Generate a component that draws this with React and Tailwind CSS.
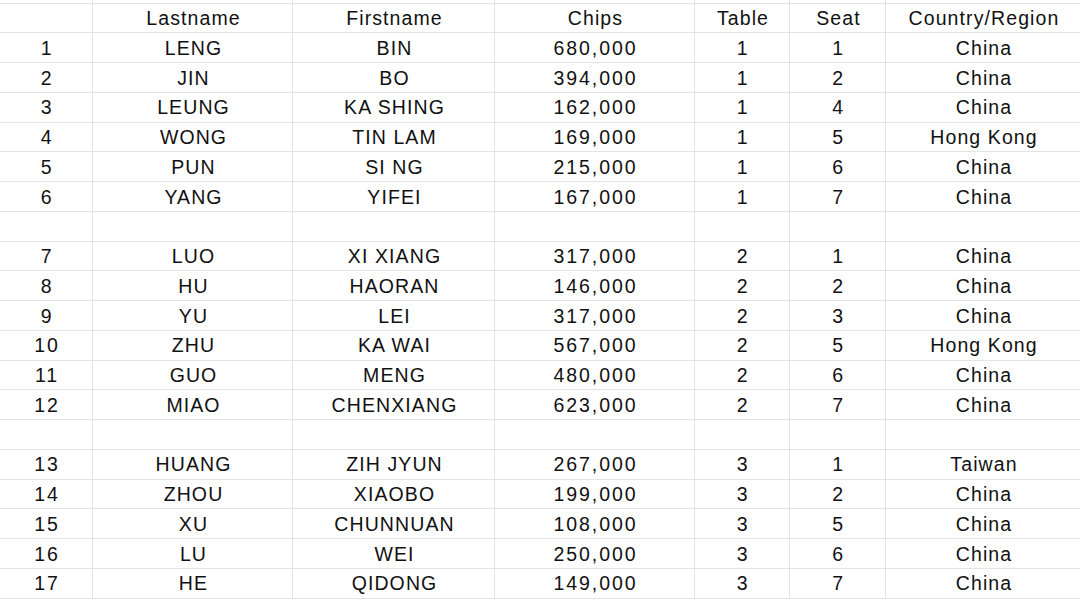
import React from 'react';

const header = ['', 'Lastname', 'Firstname', 'Chips', 'Table', 'Seat', 'Country/Region'];

const rows = [
  ['1', 'LENG', 'BIN', '680,000', '1', '1', 'China'],
  ['2', 'JIN', 'BO', '394,000', '1', '2', 'China'],
  ['3', 'LEUNG', 'KA SHING', '162,000', '1', '4', 'China'],
  ['4', 'WONG', 'TIN LAM', '169,000', '1', '5', 'Hong Kong'],
  ['5', 'PUN', 'SI NG', '215,000', '1', '6', 'China'],
  ['6', 'YANG', 'YIFEI', '167,000', '1', '7', 'China'],
  null,
  ['7', 'LUO', 'XI XIANG', '317,000', '2', '1', 'China'],
  ['8', 'HU', 'HAORAN', '146,000', '2', '2', 'China'],
  ['9', 'YU', 'LEI', '317,000', '2', '3', 'China'],
  ['10', 'ZHU', 'KA WAI', '567,000', '2', '5', 'Hong Kong'],
  ['11', 'GUO', 'MENG', '480,000', '2', '6', 'China'],
  ['12', 'MIAO', 'CHENXIANG', '623,000', '2', '7', 'China'],
  null,
  ['13', 'HUANG', 'ZIH JYUN', '267,000', '3', '1', 'Taiwan'],
  ['14', 'ZHOU', 'XIAOBO', '199,000', '3', '2', 'China'],
  ['15', 'XU', 'CHUNNUAN', '108,000', '3', '5', 'China'],
  ['16', 'LU', 'WEI', '250,000', '3', '6', 'China'],
  ['17', 'HE', 'QIDONG', '149,000', '3', '7', 'China'],
];

const empty = ['', '', '', '', '', '', ''];

// numeric columns get wider tracking to mimic the wide digits of the original font
const numeric = [true, false, false, true, true, true, false];

function Row({ cells, height = 'h-[29.75px]', isHeader = false }) {
  return (
    <div className={`grid grid-cols-[93px_200px_202px_200px_95px_96px_1fr] ${height} border-b border-[#e4e4e4]`}>
      {cells.map((c, i) => (
        <div
          key={i}
          className={`flex items-center justify-center pt-[2px] ${i < 6 ? 'border-r border-[#e4e4e4]' : ''} ${
            numeric[i] && !isHeader ? 'tracking-[1.9px] pl-[2px]' : 'tracking-[1.1px] pl-[2px]'
          }`}
        >
          {c}
        </div>
      ))}
    </div>
  );
}

export default function App() {
  return (
    <div className="w-[1080px] h-[600px] overflow-hidden bg-white text-[#111] text-[19.5px] leading-none font-['Liberation_Sans',Arial,sans-serif]">
      <Row cells={empty} height="h-[3.5px]" />
      <Row cells={header} isHeader />
      {rows.map((r, i) => (
        <Row key={i} cells={r || empty} />
      ))}
    </div>
  );
}
